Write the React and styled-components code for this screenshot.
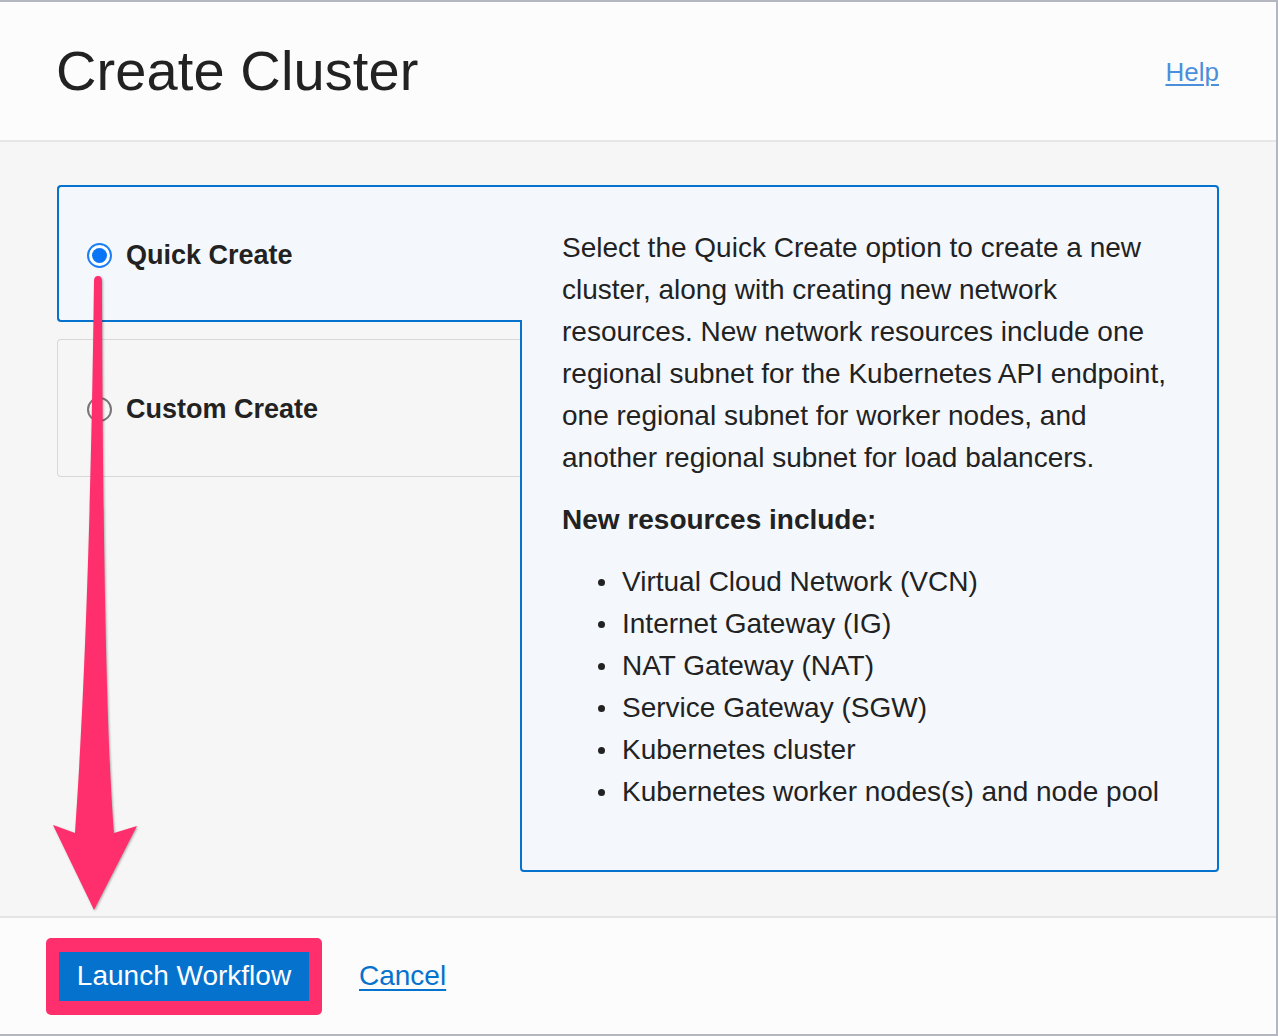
import React from "react";
import styled, { createGlobalStyle } from "styled-components";

const Global = createGlobalStyle`
  html, body { margin: 0; padding: 0; background: #fcfcfc; }
  body { font-family: "Liberation Sans", Arial, Helvetica, sans-serif; color: #222; }
  * { box-sizing: border-box; }
`;

const Frame = styled.div`
  position: relative;
  width: 1278px;
  height: 1036px;
  display: flex;
  flex-direction: column;
  border-top: 2px solid #b4b7bf;
  border-bottom: 2px solid #b4b7bf;
  border-right: 2px solid #b4b7bf;
  background: #fcfcfc;
  overflow: hidden;
`;

const Header = styled.header`
  height: 140px;
  flex: none;
  display: flex;
  align-items: center;
  justify-content: space-between;
  padding: 0 57px 0 56px;
  border-bottom: 2px solid #e6e6e6;
  background: #fcfcfc;
`;

const Title = styled.h1`
  margin: 0;
  font-size: 56px;
  font-weight: 400;
  color: #222;
  line-height: 1;
  letter-spacing: 0.1px;
`;

const HelpLink = styled.a`
  font-size: 26px;
  color: #4b8fdb;
  text-decoration: underline;
  text-underline-offset: 3px;
  text-decoration-thickness: 2px;
  margin-top: 2px;
`;

const Body = styled.main`
  flex: 1;
  background: #f6f6f6;
  padding: 43px 57px 0 57px;
`;

const Options = styled.div`
  display: grid;
  grid-template-columns: 463px 1fr;
  grid-template-rows: 137px 17px 138px 1fr;
`;

const QuickTab = styled.label`
  grid-column: 1;
  grid-row: 1;
  position: relative;
  z-index: 1;
  margin-right: -2px;
  display: flex;
  align-items: center;
  gap: 14px;
  padding: 3px 0 0 28px;
  background: #f4f8fd;
  border: 2px solid #0572ce;
  border-right: none;
  border-radius: 4px 0 0 4px;
`;

const CustomCard = styled.label`
  grid-column: 1;
  grid-row: 3;
  display: flex;
  align-items: center;
  gap: 14px;
  padding: 2px 0 0 29px;
  border: 1px solid #d8d8d8;
  border-right: none;
  border-radius: 4px 0 0 4px;
`;

const Radio = styled.span`
  flex: none;
  width: 25px;
  height: 25px;
  border-radius: 50%;
  border: 2px solid ${(p) => (p.$checked ? "#1a7ff5" : "#767676")};
  background: ${(p) => (p.$checked ? "#fff" : "transparent")};
  display: flex;
  align-items: center;
  justify-content: center;
  &::after {
    content: "";
    display: ${(p) => (p.$checked ? "block" : "none")};
    width: 15px;
    height: 15px;
    border-radius: 50%;
    background: #0a76f6;
  }
`;

const OptionLabel = styled.span`
  font-size: 27px;
  font-weight: 700;
  color: #222;
`;

const Panel = styled.section`
  grid-column: 2;
  grid-row: 1 / span 4;
  background: #f4f8fd;
  border: 2px solid #0572ce;
  border-radius: 0 4px 4px 4px;
  padding: 40px 30px 57px 40px;
  font-size: 28px;
  line-height: 42px;
  color: #222;
`;

const Para = styled.p`
  margin: 0;
  width: 625px;
`;

const SubHead = styled.h3`
  margin: 20px 0 0 0;
  font-size: 28px;
  line-height: 42px;
  font-weight: 700;
`;

const List = styled.ul`
  list-style: none;
  margin: 20px 0 0 0;
  padding: 0;
`;

const Item = styled.li`
  display: flex;
  align-items: center;
  &::before {
    content: "";
    flex: none;
    width: 7px;
    height: 7px;
    border-radius: 50%;
    background: #222;
    margin-left: 36px;
    margin-right: 17px;
  }
`;

const Footer = styled.footer`
  flex: none;
  height: 118px;
  border-top: 2px solid #e4e4e4;
  background: #fcfcfc;
  display: flex;
  align-items: center;
  padding-left: 46px;
`;

const Highlight = styled.div`
  background: #ff2f6d;
  border-radius: 5px;
  padding: 14px 13px;
  display: flex;
`;

const PrimaryButton = styled.button`
  height: 49px;
  width: 250px;
  border: none;
  background: #0572ce;
  color: #fff;
  font-family: "Liberation Sans", Arial, sans-serif;
  font-size: 28px;
  padding: 0;
`;

const CancelLink = styled.a`
  margin-left: 37px;
  font-size: 28px;
  color: #0572ce;
  text-decoration: underline;
  text-underline-offset: 4px;
  text-decoration-thickness: 2px;
`;

const ArrowLayer = styled.svg`
  position: absolute;
  left: 0;
  top: -2px;
  width: 1278px;
  height: 1036px;
  pointer-events: none;
  z-index: 5;
  filter: drop-shadow(1px 1.5px 1px rgba(0, 0, 0, 0.3));
`;

const items = [
  "Virtual Cloud Network (VCN)",
  "Internet Gateway (IG)",
  "NAT Gateway (NAT)",
  "Service Gateway (SGW)",
  "Kubernetes cluster",
  "Kubernetes worker nodes(s) and node pool",
];

export default function App() {
  return (
    <>
      <Global />
      <Frame>
        <Header>
          <Title>Create Cluster</Title>
          <HelpLink>Help</HelpLink>
        </Header>
        <Body>
          <Options>
            <QuickTab>
              <Radio $checked />
              <OptionLabel>Quick Create</OptionLabel>
            </QuickTab>
            <CustomCard>
              <Radio />
              <OptionLabel>Custom Create</OptionLabel>
            </CustomCard>
            <Panel>
              <Para>
                Select the Quick Create option to create a new cluster, along with
                creating new network resources. New network resources include one
                regional subnet for the Kubernetes API endpoint, one regional subnet
                for worker nodes, and another regional subnet for load balancers.
              </Para>
              <SubHead>New resources include:</SubHead>
              <List>
                {items.map((t) => (
                  <Item key={t}>{t}</Item>
                ))}
              </List>
            </Panel>
          </Options>
        </Body>
        <Footer>
          <Highlight>
            <PrimaryButton>Launch Workflow</PrimaryButton>
          </Highlight>
          <CancelLink>Cancel</CancelLink>
        </Footer>
        <ArrowLayer viewBox="0 0 1278 1036">
          <path
            d="M94 281 Q94 276 98 276 Q102 276 102 281 C103 600 108 760 114 833 L137 826 L94 910 L53 825 L75 833 C80 760 90 600 94 281 Z"
            fill="#ff2f6d"
          />
        </ArrowLayer>
      </Frame>
    </>
  );
}
